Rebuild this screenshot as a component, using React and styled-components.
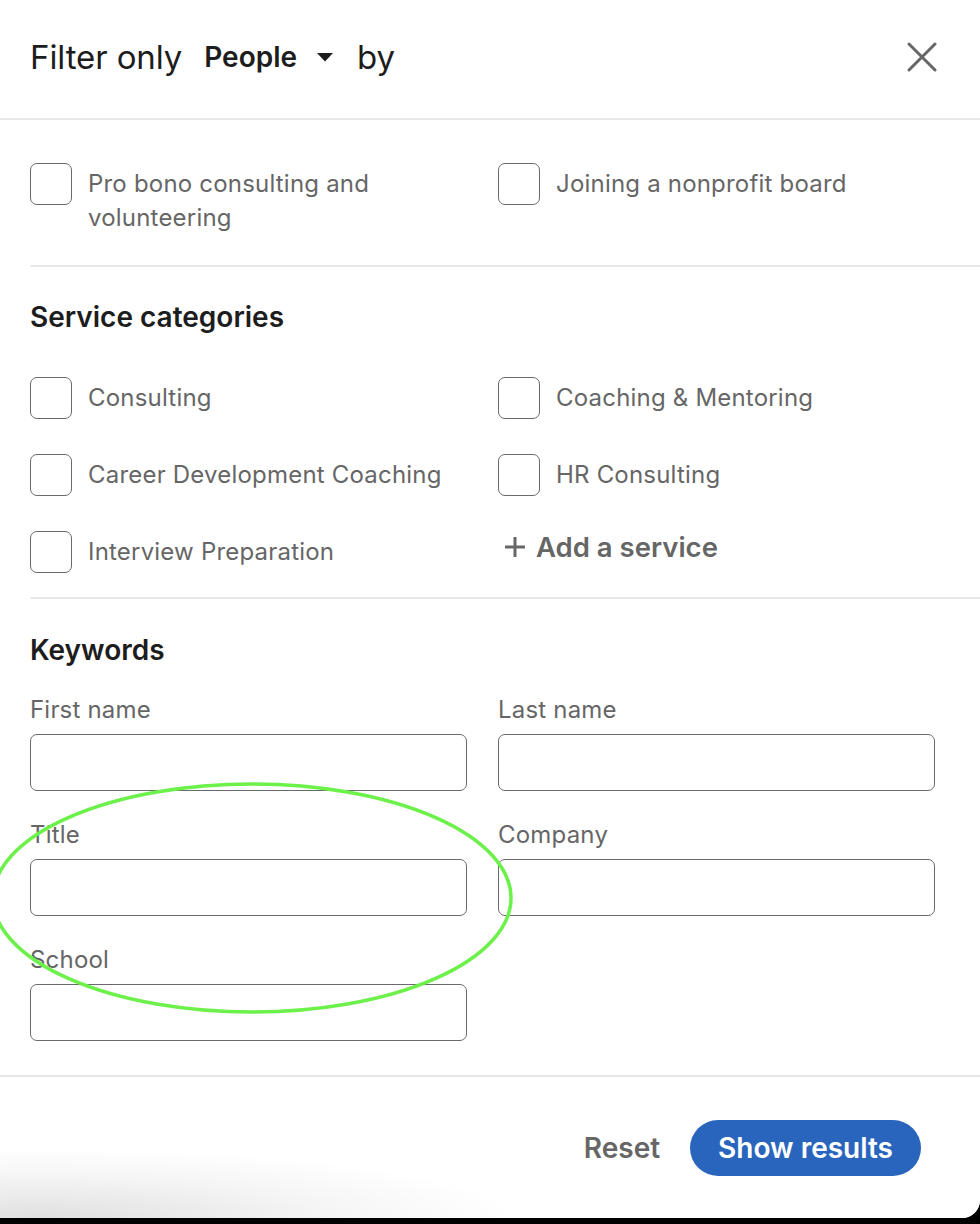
import React from "react";
import styled, { createGlobalStyle } from "styled-components";

const Global = createGlobalStyle`
  html, body { margin: 0; padding: 0; background: #000; }
  body { font-family: Inter, "Noto Sans", "Liberation Sans", sans-serif; }
  * { box-sizing: border-box; }
`;

const Panel = styled.div`
  position: relative;
  width: 980px;
  height: 1218px;
  background: #fff;
  border-bottom-right-radius: 18px;
  overflow: hidden;
  display: flex;
  flex-direction: column;
`;

const Header = styled.header`
  height: 120px;
  flex: none;
  display: flex;
  align-items: center;
  padding: 0 42px 4px 30px;
  border-bottom: 2px solid #e8e8e8;
`;

const Title = styled.h1`
  margin: 0;
  flex: 1;
  display: flex;
  align-items: center;
  font-size: 33px;
  font-weight: 400;
  color: #1d1d1d;
  letter-spacing: -0.1px;
`;

const TypeSelect = styled.button`
  display: inline-flex;
  align-items: center;
  gap: 20px;
  margin: 0 24px 0 22px;
  padding: 0;
  border: none;
  background: none;
  font-family: inherit;
  font-size: 28px;
  font-weight: 600;
  color: #1d1d1d;
`;

const CloseButton = styled.button`
  border: none;
  background: none;
  padding: 0;
  width: 32px;
  height: 32px;
  display: flex;
  align-items: center;
  justify-content: center;
`;

const Body = styled.div`
  flex: 1;
  padding-left: 30px;
`;

const Section = styled.section`
  padding: ${(p) => p.$pad};
  padding-right: 45px;
  border-bottom: ${(p) => (p.$last ? "none" : "2px solid #e8e8e8")};
`;

const Heading = styled.h2`
  margin: 0 0 ${(p) => p.$gap || 0}px;
  font-size: 28px;
  line-height: 32px;
  font-weight: 600;
  color: #1d1d1d;
`;

const Grid = styled.div`
  display: grid;
  grid-template-columns: 437px 437px;
  column-gap: 31px;
  row-gap: ${(p) => p.$rowGap}px;
  align-items: start;
`;

const Option = styled.label`
  display: flex;
  align-items: flex-start;
  gap: 16px;
  font-size: 24px;
  line-height: 34px;
  letter-spacing: 0.2px;
  color: #666;
`;

const Box = styled.span`
  flex: none;
  width: 42px;
  height: 42px;
  border: 1.5px solid #6a6a6a;
  border-radius: 7px;
  margin-top: -1px;
`;

const OptionText = styled.span`
  padding-top: 3px;
`;

const AddService = styled.button`
  display: flex;
  align-items: center;
  gap: 10px;
  margin: -2px 0 0 6px;
  padding: 0;
  border: none;
  background: none;
  font-family: inherit;
  font-size: 27.5px;
  font-weight: 600;
  color: #666;
`;

const Field = styled.div`
  display: flex;
  flex-direction: column;
  gap: 9px;
`;

const FieldLabel = styled.label`
  font-size: 24px;
  line-height: 32px;
  letter-spacing: 0.2px;
  color: #666;
`;

const Input = styled.input`
  height: 57px;
  width: 100%;
  margin-top: -1px;
  border: 1.5px solid #6a6a6a;
  border-radius: 7px;
  background: #fff;
  font-family: inherit;
  font-size: 24px;
`;

const Footer = styled.footer`
  height: 143px;
  flex: none;
  display: flex;
  align-items: center;
  justify-content: flex-end;
  gap: 30px;
  padding: 0 59px 0 0;
  border-top: 2px solid #e8e8e8;
  background:
    radial-gradient(ellipse 480px 70px at 40px 100%, rgba(0,0,0,0.12), rgba(0,0,0,0.04) 60%, rgba(0,0,0,0) 100%),
    #fff;
`;

const Reset = styled.button`
  border: none;
  background: none;
  padding: 0;
  font-family: inherit;
  font-size: 28px;
  font-weight: 600;
  color: #666;
`;

const Primary = styled.button`
  height: 56px;
  padding: 0 28px;
  border: none;
  border-radius: 28px;
  background: #2a65bd;
  color: #fff;
  font-family: inherit;
  font-size: 28px;
  font-weight: 600;
`;

const Annotation = styled.svg`
  position: absolute;
  left: 0;
  top: 0;
  pointer-events: none;
`;

const services = [
  "Consulting",
  "Coaching & Mentoring",
  "Career Development Coaching",
  "HR Consulting",
  "Interview Preparation",
];

const fields = ["First name", "Last name", "Title", "Company", "School"];

export default function App() {
  return (
    <>
      <Global />
      <Panel>
        <Header>
          <Title>
            Filter only
            <TypeSelect>
              People
              <svg width="16" height="9" viewBox="0 0 16 9">
                <path d="M0 0 H16 L8 8.5 Z" fill="#1d1d1d" />
              </svg>
            </TypeSelect>
            by
          </Title>
          <CloseButton aria-label="Close">
            <svg width="30" height="30" viewBox="0 0 30 30">
              <path d="M2 2 L28 28 M28 2 L2 28" stroke="#666" strokeWidth="3" strokeLinecap="round" />
            </svg>
          </CloseButton>
        </Header>
        <Body>
          <Section $pad="44px 0 30px">
            <Grid $rowGap={36}>
              <Option>
                <Box />
                <OptionText>Pro bono consulting and<br />volunteering</OptionText>
              </Option>
              <Option>
                <Box />
                <OptionText>Joining a nonprofit board</OptionText>
              </Option>
            </Grid>
          </Section>
          <Section $pad="34px 0 24px">
            <Heading $gap={45}>Service categories</Heading>
            <Grid $rowGap={36}>
              {services.map((s) => (
                <Option key={s}>
                  <Box />
                  <OptionText>{s}</OptionText>
                </Option>
              ))}
              <AddService>
                <svg width="22" height="22" viewBox="0 0 22 22">
                  <path d="M11 1 V21 M1 11 H21" stroke="#666" strokeWidth="3" />
                </svg>
                Add a service
              </AddService>
            </Grid>
          </Section>
          <Section $pad="35px 0 33px" $last>
            <Heading $gap={28}>Keywords</Heading>
            <Grid $rowGap={28}>
              {fields.map((f) => (
                <Field key={f}>
                  <FieldLabel>{f}</FieldLabel>
                  <Input type="text" />
                </Field>
              ))}
            </Grid>
          </Section>
        </Body>
        <Footer>
          <Reset>Reset</Reset>
          <Primary>Show results</Primary>
        </Footer>
        <Annotation width="980" height="1224" viewBox="0 0 980 1224">
          <ellipse cx="252" cy="898" rx="259" ry="114" fill="none" stroke="#6cf04a" strokeWidth="3.5" />
        </Annotation>
      </Panel>
    </>
  );
}
